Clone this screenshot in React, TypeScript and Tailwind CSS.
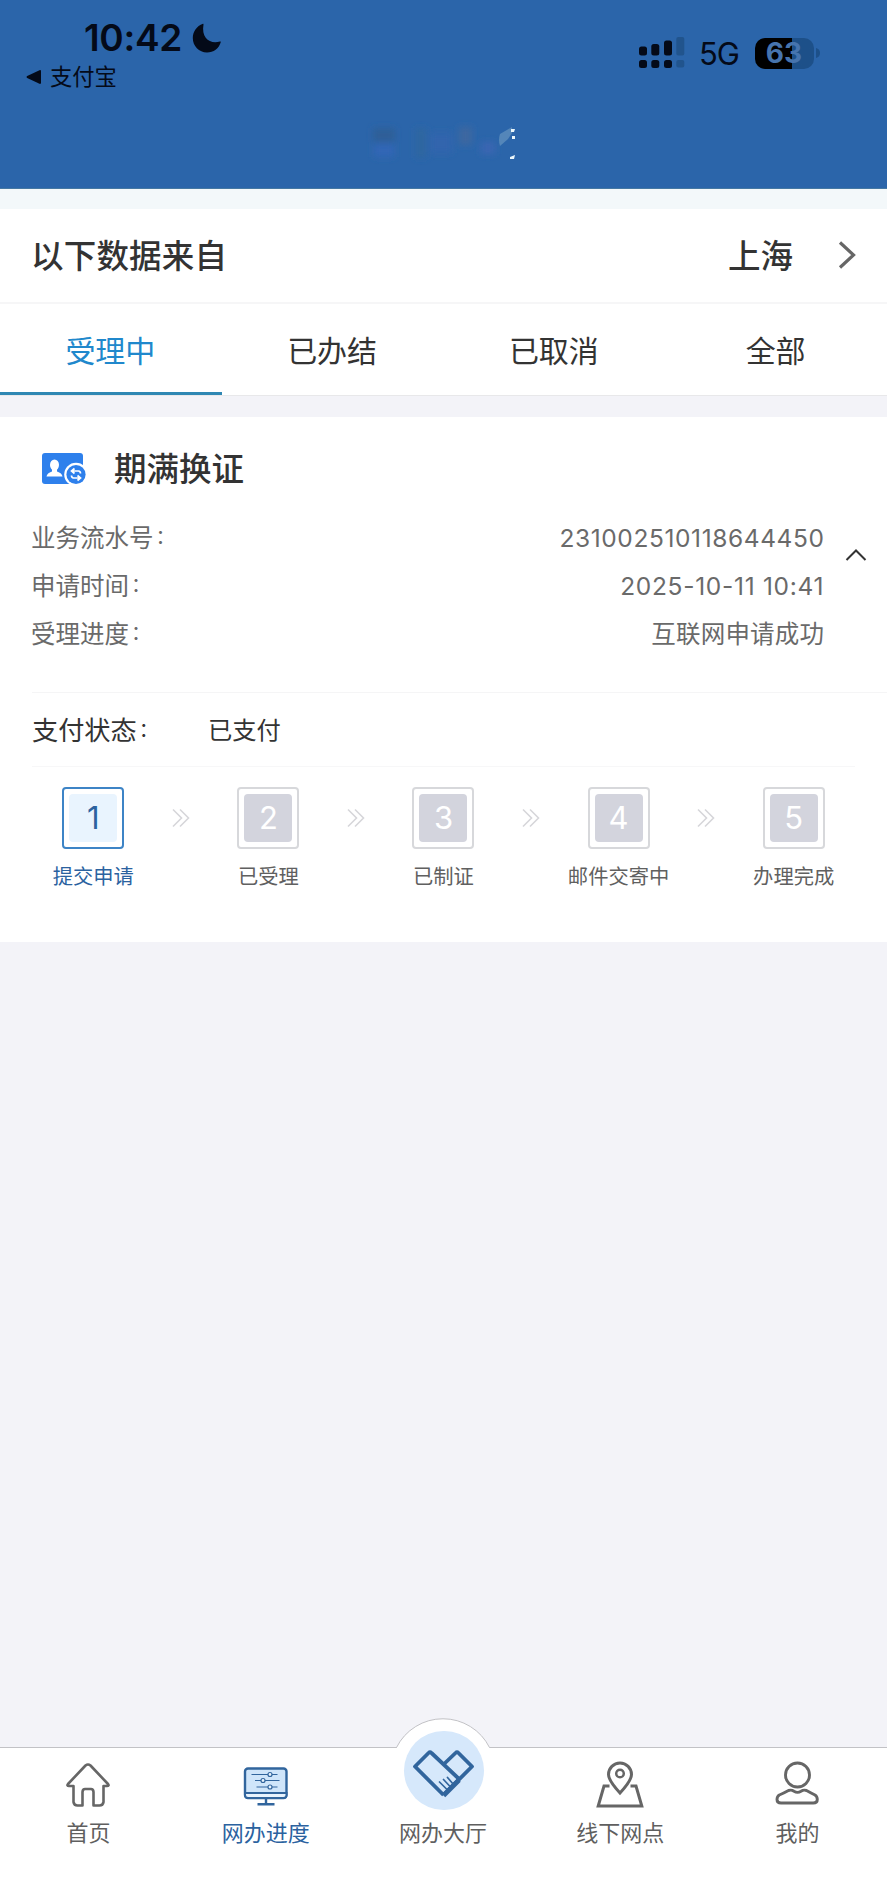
import { ReactNode, useState } from "react";
import clsx from "clsx";

const TABS = ["受理中", "已办结", "已取消", "全部"];

const DETAILS = [
  { label: "业务流水号", value: "231002510118644450", valueClass: "-mr-[0.6px] tracking-[0.6px]" },
  { label: "申请时间", value: "2025-10-11 10:41", valueClass: "-mr-[0.2px] tracking-[0.7px]" },
  { label: "受理进度", value: "互联网申请成功", valueClass: "-mr-[0.2px] tracking-[0.2px]" },
];

const STEPS = ["提交申请", "已受理", "已制证", "邮件交寄中", "办理完成"];

function StatusBar() {
  return (
    <div className="flex h-[100px] justify-between text-[#040a18]">
      <div className="pl-[26px] pt-[16px]">
        <div className="flex h-[44px] items-center pl-[58px]">
          <span className="text-[37px] font-semibold leading-[44px] tracking-[-0.3px]">10:42</span>
          <svg className="ml-[10px] h-[30px] w-[30px]" viewBox="0 0 30 30" fill="currentColor">
            <path d="M11 .8C4.500 3 .8 9 .8 15 .8 23 7 29.500 15 29.500c6.500 0 12-4 13.800-10.500q.2-.8-.8-.5C18.500 21.500 9 15.500 11.500 1.500q0-1-.5-.7z" />
          </svg>
        </div>
        <div className="flex h-[34px] items-center">
          <svg className="h-4 w-4" viewBox="0 0 16 16" fill="currentColor">
            <path d="M1.200 7 13.500 1.200q1.500-.5 1.500 1v11.600q0 1.500-1.500 1L1.200 9q-1.300-1 0-2z" />
          </svg>
          <span className="ml-[8px] text-[22.300px] leading-[34px]">支付宝</span>
        </div>
      </div>

      <div className="mt-[37px] flex h-[32px] items-center pr-[67px]">
        <svg className="h-[32px] w-[46px]" viewBox="0 0 46 32" fill="currentColor">
          <rect x="0" y="9.500" width="8" height="9" rx="2.500" />
          <rect x="12.300" y="7" width="8" height="11.500" rx="2.500" />
          <rect x="25" y="3.500" width="8" height="15" rx="2.500" />
          <rect x="37.300" y="0" width="8" height="18.500" rx="2" className="fill-[#21548d]" />
          <rect x="0" y="23" width="8" height="8" rx="2.500" />
          <rect x="12.300" y="23" width="8" height="8" rx="2.500" />
          <rect x="25" y="23" width="8" height="8" rx="2.500" />
          <rect x="37.300" y="23" width="8" height="7.500" rx="2" className="fill-[#21548d]" />
        </svg>
        <span className="ml-[14px] w-[56px] pt-[2px] text-[31px] leading-[32px] tracking-[-1px]">5G</span>
        <div className="flex h-[31px] w-[59px] items-center justify-center rounded-[10px] bg-linear-to-r from-black from-63% to-[#1d5089] to-63% pr-[1px] text-[28px] font-bold leading-[31px] text-[#4674ae]">
          63
        </div>
        <svg className="ml-[2px] h-[10px] w-[4px]" viewBox="0 0 4 10">
          <path d="M0 0q4 1 4 5T0 10z" fill="#1d5089" />
        </svg>
      </div>
    </div>
  );
}

// Faded page title
function TitleGhost() {
  return (
    <svg className="mx-auto mt-[18px] h-[48px] w-[160px]" viewBox="0 0 160 48">
      <defs>
        <filter id="smudge" x="-50%" y="-50%" width="200%" height="200%">
          <feGaussianBlur stdDeviation="3" />
        </filter>
        <filter id="soft">
          <feGaussianBlur stdDeviation="0.6" />
        </filter>
      </defs>
      <g filter="url(#smudge)">
        <rect x="9" y="10" width="22" height="14" fill="#2f5e98" />
        <rect x="10" y="26" width="20" height="13" fill="#3066b6" />
        <rect x="52" y="10" width="10" height="30" fill="#2d66a0" />
        <rect x="66" y="15" width="22" height="20" fill="#3365ad" />
        <rect x="95" y="9" width="13" height="18" fill="#3c68a0" />
        <rect x="117" y="24" width="14" height="12" fill="#3a66b2" />
      </g>
      <path d="M136 16 148 9v6l-4 6-8 7q-2-6 0-12z" fill="#6f9dc4" opacity="0.6" filter="url(#soft)" />
      <path d="M147 11h4l-1 3h-3zM148 18h3v3h-3zM146 39l5-2-1 4h-4z" fill="#eaf6fb" filter="url(#soft)" />
    </svg>
  );
}

function LicenseRenewIcon() {
  return (
    <svg className="h-[34px] w-[46px]" viewBox="0 0 46 34" fill="none">
      <rect x="0" y="1" width="41" height="31" rx="3" fill="#2e80ec" />
      <ellipse cx="12.500" cy="13" rx="4.500" ry="5.500" fill="#fff" />
      <path d="M10 17h5v2.500q5 1.500 5.500 5H4.500Q5 21 10 19.500z" fill="#fff" />
      <circle cx="34" cy="22.500" r="11.800" fill="#fff" />
      <circle cx="34" cy="22.500" r="9.600" fill="#2e80ec" />
      <path d="M32.500 16.500 29.500 19l3 2.500M30 19h6.500q2 .3 2 2.500M35.500 23.500l3 2.500-3 2.500M38 26h-6.500q-2-.3-2-2.500" stroke="#fff" strokeWidth="1.700" />
    </svg>
  );
}

function DoubleChevron() {
  return (
    <svg className="mt-[21px] h-[20px] w-[20px] shrink-0" viewBox="0 0 20 20" fill="none" stroke="#d6d6da" strokeWidth="1.600">
      <path d="M2 1.500 10.500 10 2 18.500M9 1.500 17.500 10 9 18.500" />
    </svg>
  );
}

function HomeIcon() {
  return (
    <svg className="-ml-[2px] h-[46px] w-[46px]" viewBox="0 0 46 46" fill="none" stroke="#666" strokeWidth="2.600" strokeLinejoin="round">
      <path d="M20.500 3.500q2.500-2 5 0L43 22q1.500 2-1 2H38.500v16q-.5 3.500-4 3.500H28.500V30q-.2-3-2.500-3h-6q-2.300 0-2.500 3v13.500h-5q-3.500 0-4-3.500V24H4q-2.500 0-1-2z" />
    </svg>
  );
}

function MonitorIcon() {
  return (
    <svg className="h-[46px] w-[46px]" viewBox="0 0 46 46" fill="none" stroke="#31659d" strokeWidth="2.400">
      <rect x="2" y="6.500" width="41.500" height="29.500" rx="3" fill="#cfe5fa" />
      <path d="M2 31h41.500v2q0 3-3 3H5q-3 0-3-3z" fill="#e8f3fd" strokeWidth="2" />
      <path d="M23 36v6M14.500 42.300h17" />
      <g strokeWidth="1.200" fill="#e8f3fd">
        <path d="M8.500 12.500H25M29 12.500h5.500M12 18.500h6M22 18.500h14.500M13.500 25H25M29 25h5.500" />
        <circle cx="27" cy="12.500" r="2" />
        <circle cx="20" cy="18.500" r="2" />
        <circle cx="27" cy="25" r="2" />
      </g>
    </svg>
  );
}

function MapPinIcon() {
  return (
    <svg className="-mt-[2px] h-[50px] w-[50px]" viewBox="0 0 50 50" fill="none" stroke="#666" strokeWidth="3">
      <path d="M14.500 27H9L3.200 47h43.600L41 27h-5.500" />
      <path d="M25 34Q13.500 21.500 13.500 15.500a11.500 11.500 0 0 1 23 0Q36.500 21.500 25 34z" />
      <circle cx="25" cy="14.500" r="3.800" strokeWidth="2.500" />
    </svg>
  );
}

function UserIcon() {
  return (
    <svg className="-mt-[4px] h-[46px] w-[46px]" viewBox="0 0 46 46" fill="none" stroke="#666" strokeWidth="2.900">
      <circle cx="23.500" cy="15" r="12" />
      <path d="M14.500 30.500q3-1 5.500.8 3.500 2.200 7 0 2.500-1.800 5.500-.8Q37 33 41 35q2.300 1.500 2.300 4.500 0 3.500-4 3.500H7q-4 0-4-3.500 0-3 2.300-4.500 4.700-2 9.200-4.500z" />
    </svg>
  );
}

function HandshakeIcon() {
  return (
    <svg className="mt-[8px] h-[50px] w-[64px]" viewBox="0 0 64 50" fill="none" stroke="#31659d" strokeWidth="3.800" strokeLinejoin="round">
      <path d="M31.500 46 3 17.500 16.500 4q1.500-1.500 3 0L47 30" />
      <path d="M31.500 46 60 17.500 46.500 4q-1.500-1.500-3 0L32 15" />
      <path d="M31.500 46.500 47 31" strokeWidth="5" />
      <g strokeWidth="1.700" strokeLinecap="round">
        <path d="M27.500 33l8 8M31.500 30.500l7.500 8M35.500 28.500l6 7" />
      </g>
    </svg>
  );
}

function Colon() {
  return <span className="relative -top-[3px] ml-[2px] text-[20px]">：</span>;
}

function NavItem({ label, active, children }: { label: string; active?: boolean; children: ReactNode }) {
  return (
    <button className="flex flex-1 flex-col items-center">
      <span className="flex h-[66px] items-center justify-center pt-[8px]">{children}</span>
      <span className={clsx("text-[22px] leading-[38px] whitespace-nowrap", active ? "text-[#2b629f]" : "text-[#5f5f5f]")}>{label}</span>
    </button>
  );
}

export default function App() {
  const [tab, setTab] = useState(0);

  return (
    <div className="flex h-[1880px] w-[887px] flex-col bg-[#f3f3f8] font-['Inter','Noto_Sans_CJK_SC',sans-serif] text-[#333]">
      <header className="h-[189px] border-b border-[#4578a3] bg-[#2b65aa]">
        <StatusBar />
        <TitleGhost />
      </header>

      {/* Data source */}
      <div className="flex h-[113px] items-center border-t-20 border-[#f3f8fa] bg-white px-[31px] text-[32.500px] font-medium">
        <span className="pt-[3px] tracking-[0.2px]">以下数据来自</span>
        <span className="ml-auto pt-[3px]">上海</span>
        <svg className="-mt-[2px] ml-[45px] h-[28px] w-[18px]" viewBox="0 0 18 28" fill="none" stroke="#666" strokeWidth="3.200">
          <path d="M2 1.500 15.500 14 2 26.500" />
        </svg>
      </div>

      {/* Tabs */}
      <div className="flex h-[94px] border-t-2 border-b border-t-[#f6f6f7] border-b-[#e8e8ea] bg-white">
        {TABS.map((name, i) => (
          <button
            key={name}
            onClick={() => setTab(i)}
            className={clsx(
              "flex-1 border-b-[3px] pt-[6px] pr-[1px] text-[30px] leading-[82px]",
              i === tab ? "border-[#2f87b3] text-[#2088cc]" : "border-transparent"
            )}
          >
            {name}
          </button>
        ))}
      </div>

      {/* Application card */}
      <section className="mt-[21px] h-[525px] bg-white">
        <div className="flex h-[98px] items-center pl-[42px] pt-[6px]">
          <LicenseRenewIcon />
          <h2 className="ml-[26px] pt-[3px] text-[32.500px] font-medium">期满换证</h2>
        </div>
        <div className="flex h-[177px] items-start pl-[31px] pr-[20px]">
          <div className="-mt-px flex-1">
            {DETAILS.map((row) => (
              <div key={row.label} className="flex h-[48px] items-center justify-between text-[24.500px] text-[#6a6a6a]">
                <span>
                  {row.label}
                  <Colon />
                </span>
                <span className={row.valueClass}>{row.value}</span>
              </div>
            ))}
          </div>
          <svg className="ml-[21px] mt-[33px] h-[14px] w-[22px]" viewBox="0 0 22 14" fill="none" stroke="#333" strokeWidth="2">
            <path d="M1.500 12 11 2.500 20.500 12" />
          </svg>
        </div>

        <div className="ml-[32px] flex h-[74px] items-center border-t border-[#f5f5f6]">
          <span className="w-[176px] pt-[2px] text-[26.200px]">
            支付状态
            <Colon />
          </span>
          <span className="pt-[2px] text-[24.300px]">已支付</span>
        </div>

        <div className="mx-[32px] flex justify-between border-t border-[#f7f7f8] px-[1.300px] pt-[20px]">
          {STEPS.map((step, i) => (
            <div key={step} className="contents">
              {i > 0 && (
                <div className="flex w-[55px] justify-center">
                  <DoubleChevron />
                </div>
              )}
              <div className="flex w-[120px] flex-col items-center">
                <div
                  className={clsx(
                    "flex h-[62px] w-[62px] items-center justify-center rounded-[4px] border-2",
                    i === 0 ? "border-[#3d84c6]" : "border-[#d7d8db]"
                  )}
                >
                  <span
                    className={clsx(
                      "flex h-[48px] w-[48px] items-center justify-center rounded-[4px] pt-[1px] text-[31px]",
                      i === 0 ? "bg-[#e9f4fe] text-[#2b629f]" : "bg-[#d3d4dd] text-white"
                    )}
                  >
                    {i + 1}
                  </span>
                </div>
                <span className={clsx("mt-[12px] text-[20.300px] leading-[32px]", i === 0 ? "text-[#2b629f]" : "text-[#606060]")}>{step}</span>
              </div>
            </div>
          ))}
        </div>
      </section>

      {/* Bottom navigation */}
      <nav className="relative mt-auto flex h-[133px] border-t border-[#c2c2c6] bg-white pr-[1px]">
        <svg className="absolute left-[390px] top-[-31px] h-[60px] w-[106px]" viewBox="0 0 106 60" fill="#fff">
          <path d="M0 31h6.500A52 52 0 0 1 100 31h6v29H0z" />
          <path d="M0 30.500h6.500A52 52 0 0 1 99.500 30.500h6.500" fill="none" stroke="#c2c2c6" />
        </svg>
        <NavItem label="首页">
          <HomeIcon />
        </NavItem>
        <NavItem label="网办进度" active>
          <MonitorIcon />
        </NavItem>
        <NavItem label="网办大厅">
          <span className="relative -mt-[30px] ml-[1px] flex h-[79px] w-[80px] items-center justify-center rounded-full bg-[#d6e8fb]">
            <HandshakeIcon />
          </span>
        </NavItem>
        <NavItem label="线下网点">
          <MapPinIcon />
        </NavItem>
        <NavItem label="我的">
          <UserIcon />
        </NavItem>
      </nav>
    </div>
  );
}
